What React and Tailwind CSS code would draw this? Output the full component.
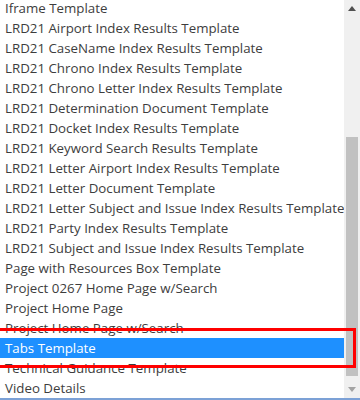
import React from "react";

const items = [
  "Iframe Template",
  "LRD21 Airport Index Results Template",
  "LRD21 CaseName Index Results Template",
  "LRD21 Chrono Index Results Template",
  "LRD21 Chrono Letter Index Results Template",
  "LRD21 Determination Document Template",
  "LRD21 Docket Index Results Template",
  "LRD21 Keyword Search Results Template",
  "LRD21 Letter Airport Index Results Template",
  "LRD21 Letter Document Template",
  "LRD21 Letter Subject and Issue Index Results Template",
  "LRD21 Party Index Results Template",
  "LRD21 Subject and Issue Index Results Template",
  "Page with Resources Box Template",
  "Project 0267 Home Page w/Search",
  "Project Home Page",
  "Project Home Page w/Search",
  "Tabs Template",
  "Technical Guidance Template",
  "Video Details",
];

export default function App() {
  return (
    <div className="relative w-[360px] h-[400px] bg-white overflow-hidden" style={{ fontFamily: '"Open Sans", sans-serif' }}>
      <div className="flex h-[398px]">
        <div className="flex-1 overflow-hidden">
          <div className="-mt-[2px] flex flex-col">
            {items.map((t) => (
              <div
                key={t}
                className={
                  "h-[20px] leading-[20px] pl-[5px] text-[13.3px] whitespace-nowrap " +
                  (t === "Tabs Template" ? "bg-[#1e90ff] text-white" : "text-[#3d3d3d]")
                }
              >
                {t}
              </div>
            ))}
          </div>
        </div>
        <div className="w-[16px] bg-[#f0f0f0] flex flex-col items-center">
          <div className="h-[17px] flex items-center justify-center">
            <svg width="8" height="5" viewBox="0 0 8 5"><path d="M0 5 L4 0 L8 5 Z" fill="#505050" /></svg>
          </div>
          <div className="flex-1 w-full flex flex-col pt-[120px] pb-[5px] px-[2px]">
            <div className="flex-1 bg-[#c1c1c1]" />
          </div>
          <div className="h-[17px] flex items-center justify-center">
            <svg width="8" height="5" viewBox="0 0 8 5"><path d="M0 0 L8 0 L4 5 Z" fill="#a3a3a3" /></svg>
          </div>
        </div>
      </div>
      <div className="h-[2px] bg-[#7ca1d6]" />
      <div className="absolute left-[-10px] top-[328px] w-[366px] h-[40px] border-[3px] border-[#ff0000]" />
    </div>
  );
}
